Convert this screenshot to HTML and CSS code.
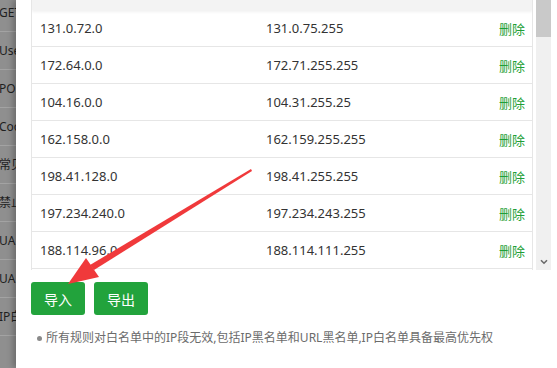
FILE: index.html
```html
<!DOCTYPE html>
<html lang="zh-CN">

<head>
    <meta charset="UTF-8">
    <meta name="viewport" content="width=device-width, initial-scale=1">
    <title>IP白名单</title>
    <link rel="stylesheet" href="styles.css">
</head>

<body>

    <div class="page">

        <!-- page behind the dialog -->
        <div class="backdrop">
            <div class="bd-row">GET</div>
            <div class="bd-row">User</div>
            <div class="bd-row">POST</div>
            <div class="bd-row">Cookie</div>
            <div class="bd-row">常见</div>
            <div class="bd-row">禁止</div>
            <div class="bd-row">UA</div>
            <div class="bd-row">UA</div>
            <div class="bd-row">IP白</div>
        </div>

        <div class="modal">
            <div class="table-box">
                <div class="table-area">
                    <div class="thead"></div>
                    <div class="row"><span class="c1">131.0.72.0</span><span class="c2">131.0.75.255</span><a class="del">删除</a></div>
                    <div class="row"><span class="c1">172.64.0.0</span><span class="c2">172.71.255.255</span><a class="del">删除</a></div>
                    <div class="row"><span class="c1">104.16.0.0</span><span class="c2">104.31.255.25</span><a class="del">删除</a></div>
                    <div class="row"><span class="c1">162.158.0.0</span><span class="c2">162.159.255.255</span><a class="del">删除</a></div>
                    <div class="row"><span class="c1">198.41.128.0</span><span class="c2">198.41.255.255</span><a class="del">删除</a></div>
                    <div class="row"><span class="c1">197.234.240.0</span><span class="c2">197.234.243.255</span><a class="del">删除</a></div>
                    <div class="row"><span class="c1">188.114.96.0</span><span class="c2">188.114.111.255</span><a class="del">删除</a></div>
                    <div class="row"><span class="c1">190.93.240.0</span><span class="c2">190.93.255.255</span><a class="del">删除</a></div>
                </div>
                <div class="scrollbar">
                    <div class="thumb"></div>
                    <div class="track"></div>
                    <svg class="sb-arrow" width="8" height="6" viewBox="0 0 8 6">
                        <path d="M1 1.2 L4 4.2 L7 1.2" fill="none" stroke="#6a6a6a" stroke-width="1.6"/>
                    </svg>
                </div>
            </div>

            <div class="actions">
                <button class="btn">导入</button>
                <button class="btn">导出</button>
            </div>

            <ul class="notes">
                <li>所有规则对白名单中的IP段无效,包括IP黑名单和URL黑名单,IP白名单具备最高优先权</li>
            </ul>
        </div>

        <!-- red annotation arrow -->
        <svg class="pointer" width="557" height="368" viewBox="0 0 557 368">
            <polygon points="251,169 252,171 94,270 90,265" fill="#f0393b"/>
            <polygon points="68,284 86,258 99,277" fill="#f0393b"/>
        </svg>

    </div>

</body>

</html>
```

FILE: styles.css
```css
html,
body {
    margin: 0;
    padding: 0;
    background-color: #fff;
}

body {
    font-family: "Noto Sans", "Noto Sans CJK SC", sans-serif;
    color: #333;
}

.page {
    position: relative;
    display: flex;
    width: 557px;
    height: 368px;
    overflow: hidden;
}

.backdrop {
    width: 16px;
    flex: none;
    background-color: #8f8f8f;
    overflow: hidden;
    margin-top: -6px;
}

.bd-row {
    height: 37px;
    line-height: 37px;
    border-bottom: 1px solid #a3a3a3;
    font-size: 12px;
    color: #1f1f1f;
    white-space: nowrap;
    text-indent: -1px;
}

.modal {
    flex: 1;
    background-color: #fff;
    padding-left: 15px;
    padding-right: 7px;
    box-shadow: -3px 0 6px rgba(0, 0, 0, 0.25);
}

.table-box {
    display: flex;
    height: 270px;
}

.table-area {
    width: 500px;
    border-left: 1px solid #e6e6e6;
    border-right: 1px solid #e6e6e6;
    overflow: hidden;
}

.thead {
    height: 10px;
    background-color: #f3f3f3;
    box-shadow: 0 2px 3px rgba(0, 0, 0, 0.06);
    position: relative;
}

.row {
    display: flex;
    align-items: center;
    height: 36px;
    border-bottom: 1px solid #e6e6e6;
    font-size: 13px;
    color: #333;
}

.c1 {
    width: 226px;
    padding-left: 8px;
}

.c2 {
    flex: 1;
}

.del {
    color: #1f9f37;
    font-size: 13px;
    padding-right: 7px;
    cursor: pointer;
}

.scrollbar {
    width: 15px;
    margin-left: 3px;
    display: flex;
    flex-direction: column;
    background-color: #f0f0f0;
}

.thumb {
    height: 37px;
    background-color: #c9c9c9;
}

.track {
    flex: 1;
}

.sb-arrow {
    display: block;
    margin: 0 auto 5px;
}

.actions {
    display: flex;
    gap: 9px;
    margin-top: 12px;
}

.btn {
    width: 54px;
    height: 33px;
    padding: 0;
    border: none;
    border-radius: 3px;
    background-color: #22a33c;
    color: #fff;
    font-family: "Noto Sans CJK SC", sans-serif;
    font-size: 14px;
    cursor: pointer;
}

.notes {
    list-style: none;
    margin: 14px 0 0;
    padding: 0 0 0 6px;
}

.notes li {
    position: relative;
    padding-left: 9px;
    font-size: 12px;
    line-height: 18px;
    color: #6b6b6b;
    white-space: nowrap;
}

.notes li::before {
    content: "";
    position: absolute;
    left: 0;
    top: 7px;
    width: 5px;
    height: 5px;
    border-radius: 50%;
    background-color: #8a8a8a;
}

.pointer {
    position: absolute;
    left: 0;
    top: 0;
    pointer-events: none;
}
```
